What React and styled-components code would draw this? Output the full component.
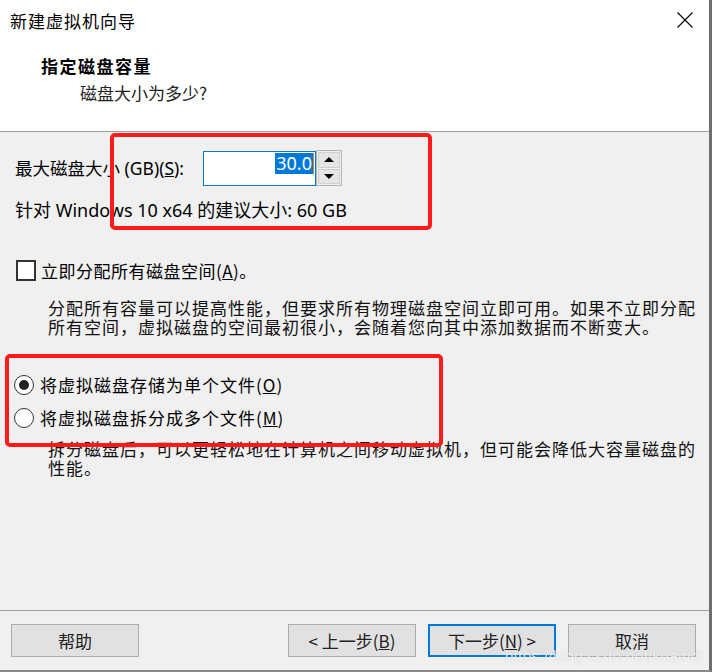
import styled, { createGlobalStyle } from "styled-components"

const Global = createGlobalStyle`
html, body {
    margin: 0;
    padding: 0;
    background: #f0f0f0;
}
body {
    font-family: "Noto Sans", "Noto Sans CJK SC", sans-serif;
    color: #000;
}
`

export default function App() {
    return (
        <Window>
            <Global />
            <Header>
                <TitleBar>
                    <Title>新建虚拟机向导</Title>
                    <CloseIcon width="16" height="16" viewBox="0 0 16 16">
                        <path d="M0.5 0.5 L15.5 15.5 M15.5 0.5 L0.5 15.5" stroke="#000" strokeWidth="1.1" fill="none" />
                    </CloseIcon>
                </TitleBar>
                <Heading>指定磁盘容量</Heading>
                <SubHeading>磁盘大小为多少?</SubHeading>
            </Header>

            <Body>
                <SizeRow>
                    <Label>最大磁盘大小 (GB)(<u>S</u>):</Label>
                    <SpinBox>
                        <NumberField>
                            <Selected>30.0</Selected>
                            <Caret />
                        </NumberField>
                        <Spinner>
                            <SpinButton><Arrow $up /></SpinButton>
                            <SpinButton><Arrow /></SpinButton>
                        </Spinner>
                    </SpinBox>
                </SizeRow>
                <Hint>针对 Windows 10 x64 的建议大小: 60 GB</Hint>

                <CheckRow>
                    <CheckBox />
                    <OptionText>立即分配所有磁盘空间(<u>A</u>)。</OptionText>
                </CheckRow>
                <Note $top={17}>
                    分配所有容量可以提高性能，但要求所有物理磁盘空间立即可用。如果不立即分配所有空间，虚拟磁盘的空间最初很小，会随着您向其中添加数据而不断变大。
                </Note>

                <RadioGroup>
                    <RadioRow>
                        <Radio $checked />
                        <RadioText>将虚拟磁盘存储为单个文件(<u>O</u>)</RadioText>
                    </RadioRow>
                    <RadioRow>
                        <Radio />
                        <RadioText>将虚拟磁盘拆分成多个文件(<u>M</u>)</RadioText>
                    </RadioRow>
                </RadioGroup>
                <Note $top={11}>
                    拆分磁盘后，可以更轻松地在计算机之间移动虚拟机，但可能会降低大容量磁盘的性能。
                </Note>

                <Highlight $x={110} $y={1} $w={322} $h={97} />
                <Highlight $x={5} $y={222} $w={438} $h={93} />
            </Body>

            <Footer>
                <Button>帮助</Button>
                <Spacer />
                <Button>&lt; 上一步(<u>B</u>)</Button>
                <Button $primary>下一步(<u>N</u>) &gt;</Button>
                <Button>取消</Button>
                <Watermark>https://blog.csdn.net/kuaindl</Watermark>
            </Footer>
        </Window>
    )
}

const Window = styled.div`
position: relative;
width: 712px;
height: 672px;
box-sizing: border-box;
display: flex;
flex-direction: column;
background: #f0f0f0;
border-right: 3px solid #6e6e6e;
border-bottom: 2px solid #8a8a8a;
overflow: hidden;
`

const Header = styled.div`
height: 132px;
background: #fff;
border-bottom: 1px solid #a0a0a0;
box-sizing: border-box;
flex-shrink: 0;
`

const TitleBar = styled.div`
height: 40px;
display: flex;
align-items: center;
justify-content: space-between;
padding: 0 16px 0 10px;
`

const Title = styled.div`
font-family: "Noto Sans CJK SC", sans-serif;
font-size: 17px;
letter-spacing: 1px;
`

const CloseIcon = styled.svg`
display: block;
`

const Heading = styled.div`
margin: 14px 0 0 41px;
font-family: "Noto Sans CJK SC", sans-serif;
font-size: 17px;
font-weight: 700;
letter-spacing: 1.5px;
line-height: 24px;
`

const SubHeading = styled.div`
margin: 3px 0 0 80px;
font-family: "Noto Sans CJK SC", sans-serif;
font-size: 17px;
line-height: 24px;
color: #222;
`

const Body = styled.div`
position: relative;
flex: 1;
min-height: 0;
padding: 18px 0 0 15px;
`

const SizeRow = styled.div`
display: flex;
align-items: center;
gap: 6px;
`

const Label = styled.div`
width: 182px;
font-size: 17.5px;
line-height: 20px;
white-space: nowrap;
`

const SpinBox = styled.div`
display: flex;
align-items: center;
`

const NumberField = styled.div`
width: 113px;
height: 35px;
box-sizing: border-box;
border: 1px solid #0078d7;
background: #fff;
display: flex;
align-items: center;
justify-content: flex-end;
padding-right: 1px;
`

const Selected = styled.span`
background: #0078d7;
color: #fff;
font-size: 18px;
line-height: 21px;
padding: 0 1px;
margin-top: -10px;
`

const Caret = styled.span`
width: 1px;
height: 21px;
background: #e87a1e;
margin-top: -10px;
`

const Spinner = styled.div`
width: 26px;
height: 36px;
box-sizing: border-box;
border: 1px solid #b4b4b4;
padding: 1px;
display: flex;
flex-direction: column;
gap: 1px;
background: #f0f0f0;
`

const SpinButton = styled.div`
flex: 1;
background: #e5e5e5;
border: 1px solid #cfcfcf;
display: flex;
align-items: center;
justify-content: center;
`

const Arrow = styled.span`
width: 0;
height: 0;
border-left: 5px solid transparent;
border-right: 5px solid transparent;
${p => p.$up ? "border-bottom: 5px solid #000;" : "border-top: 5px solid #000;"}
`

const Hint = styled.div`
margin-top: 14px;
font-size: 18px;
line-height: 20px;
`

const CheckRow = styled.div`
display: flex;
align-items: center;
gap: 5px;
margin-top: 40px;
`

const CheckBox = styled.span`
width: 16px;
height: 17px;
border: 2px solid #333;
background: #fff;
margin-left: 1px;
`

const OptionText = styled.div`
font-family: "Noto Sans CJK SC", sans-serif;
font-size: 17px;
letter-spacing: 0.5px;
line-height: 20px;
`

const Note = styled.div`
margin: ${p => p.$top}px 12px 0 33px;
font-family: "Noto Sans CJK SC", sans-serif;
font-size: 17px;
letter-spacing: 1px;
line-height: 19px;
color: #111;
`

const RadioGroup = styled.div`
display: flex;
flex-direction: column;
gap: 13px;
margin: 39px 0 0 -1px;
`

const RadioRow = styled.div`
display: flex;
align-items: center;
gap: 6px;
`

const Radio = styled.span`
width: 18px;
height: 18px;
border-radius: 50%;
border: 1px solid #333;
background: #fff;
position: relative;
flex-shrink: 0;

&::after {
    content: "";
    display: ${p => p.$checked ? "block" : "none"};
    position: absolute;
    left: 4px;
    top: 4px;
    width: 10px;
    height: 10px;
    border-radius: 50%;
    background: #222;
}
`

const RadioText = styled.div`
font-family: "Noto Sans CJK SC", sans-serif;
font-size: 17px;
letter-spacing: 1px;
line-height: 20px;
`

const Highlight = styled.div`
position: absolute;
left: ${p => p.$x}px;
top: ${p => p.$y}px;
width: ${p => p.$w}px;
height: ${p => p.$h}px;
box-sizing: border-box;
border: 4px solid #ff1a1a;
border-radius: 5px;
pointer-events: none;
`

const Footer = styled.div`
position: relative;
height: 60px;
box-sizing: border-box;
flex-shrink: 0;
border-top: 1px solid #a0a0a0;
display: flex;
align-items: flex-start;
gap: 12px;
padding: 13px 13px 0 11px;
`

const Spacer = styled.div`
flex: 1;
`

const Button = styled.div`
width: 128px;
height: 33px;
box-sizing: border-box;
background: #e1e1e1;
border: ${p => p.$primary ? "2px solid #0078d7" : "1px solid #adadad"};
display: flex;
align-items: center;
justify-content: center;
font-family: "Noto Sans CJK SC", sans-serif;
font-size: 17px;
color: #222;
`

const Watermark = styled.div`
position: absolute;
right: 6px;
bottom: 4px;
font-family: "Liberation Sans", sans-serif;
font-size: 16px;
color: rgba(255, 255, 255, 0.8);
text-shadow: 0 0 1px rgba(0, 0, 0, 0.2);
pointer-events: none;
`
